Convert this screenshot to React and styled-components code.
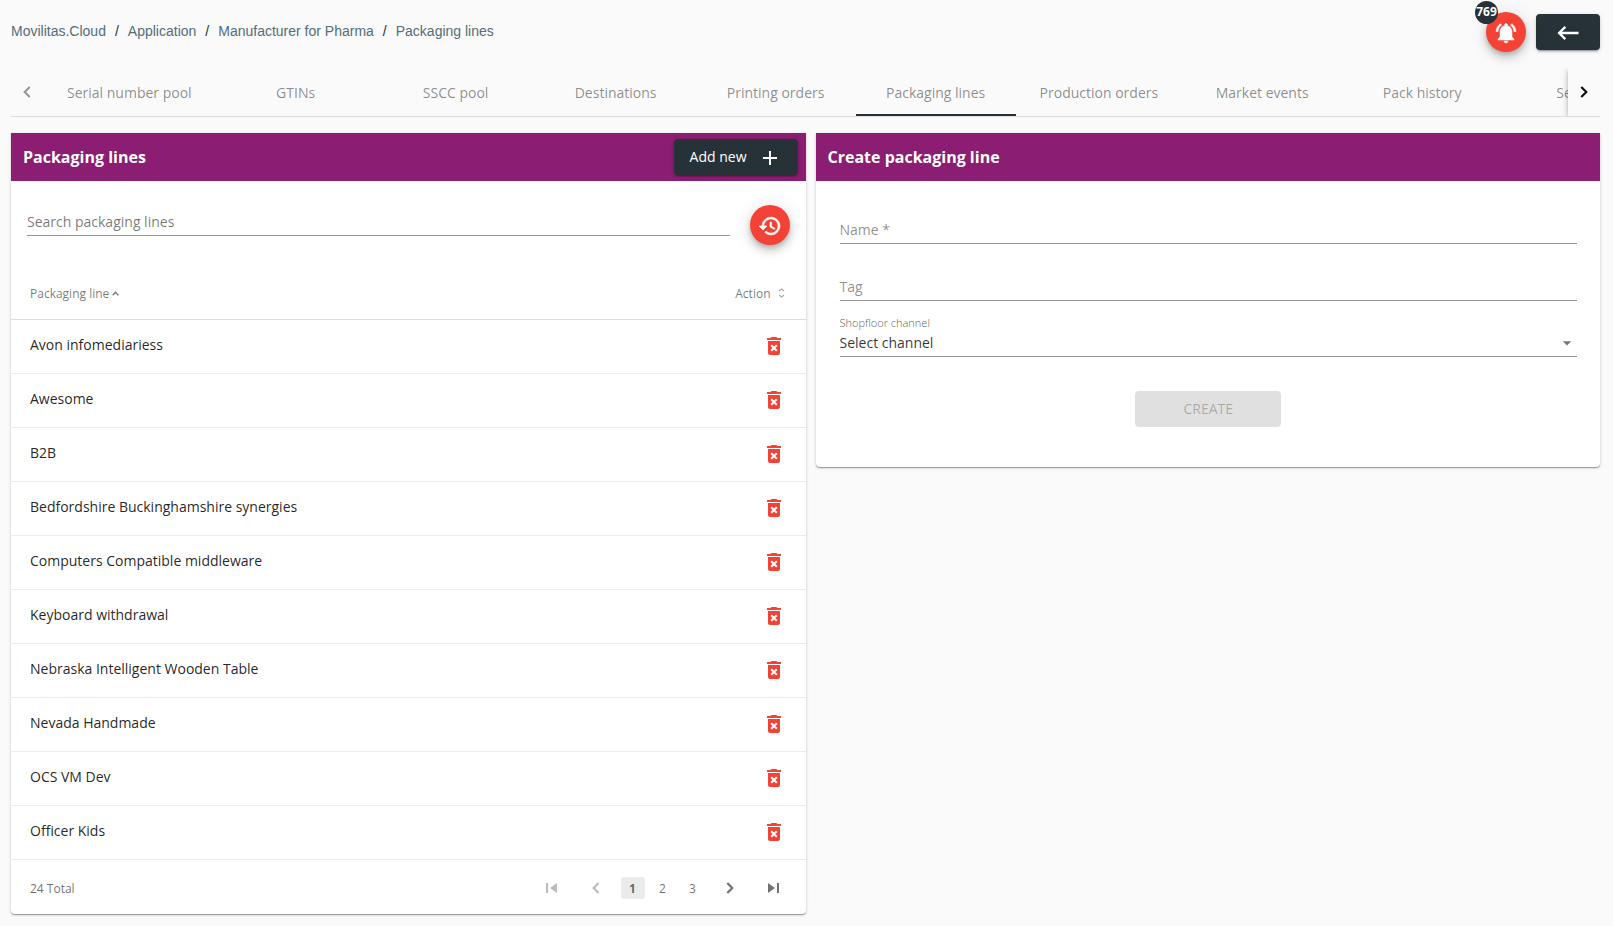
import { useState } from "react";
import styled, { createGlobalStyle } from "styled-components";
import {
  MdAdd,
  MdArrowDropDown,
  MdDeleteForever,
  MdHistory,
  MdKeyboardBackspace,
  MdNotificationsActive,
} from "react-icons/md";

const GlobalStyle = createGlobalStyle`
  * {
    box-sizing: border-box;
  }

  body {
    margin: 0;
    background-color: #fafafa;
    color: rgba(0, 0, 0, 0.87);
    font-family: "Open Sans", sans-serif;
    font-size: 14px;
  }

  button,
  input,
  select {
    font: inherit;
    color: inherit;
  }

  button {
    cursor: pointer;
  }
`;

const Page = styled.div`
  padding: 0 13px 11px 11px;
`;

const TopBar = styled.header`
  display: flex;
  align-items: center;
  justify-content: space-between;
  height: 68px;
  padding-bottom: 4px;
`;

const Breadcrumbs = styled.ol`
  display: flex;
  margin: 0;
  padding: 0 0 2px;
  list-style: none;
  font-family: "Liberation Sans", Arial, sans-serif;
  line-height: 20px;
`;

const Crumb = styled.li`
  & + &::before {
    content: "/";
    margin: 0 9px;
    color: #263238;
  }

  a {
    color: #546e7a;
    text-decoration: none;
  }
`;

const TopActions = styled.div`
  display: flex;
  align-items: center;
  gap: 10px;
`;

const RoundButton = styled.button`
  position: relative;
  display: flex;
  flex: none;
  align-items: center;
  justify-content: center;
  width: 40px;
  height: 40px;
  padding: 2px 0 0;
  border: none;
  border-radius: 50%;
  background-color: #f44336;
  color: white;
  font-size: 24px;
  box-shadow: 0 3px 5px -1px rgba(0, 0, 0, 0.2),
    0 6px 10px rgba(0, 0, 0, 0.14), 0 1px 18px rgba(0, 0, 0, 0.12);

  path:not([fill="none"]) {
    stroke-width: 0.5;
  }
`;

const Badge = styled.span`
  position: absolute;
  top: -11px;
  left: -11px;
  width: 23px;
  height: 23px;
  border-radius: 50%;
  background-color: #263238;
  font-size: 12px;
  font-weight: 700;
  line-height: 22px;
  text-align: center;
`;

const DarkButton = styled.button`
  display: flex;
  align-items: center;
  justify-content: center;
  gap: 11px;
  min-width: 64px;
  height: 36px;
  padding: 0 16px 2px;
  border: none;
  border-radius: 4px;
  background-color: #263238;
  color: white;
  box-shadow: 0 3px 1px -2px rgba(0, 0, 0, 0.2),
    0 2px 2px rgba(0, 0, 0, 0.14), 0 1px 5px rgba(0, 0, 0, 0.12);

  svg {
    flex: none;
    margin-top: 4px;
    font-size: ${({ $iconSize }) => $iconSize}px;
  }
`;

const TabBar = styled.nav`
  display: flex;
  height: 49px;
  border-bottom: 1px solid #dcdcdc;
`;

const TabScroller = styled.div`
  display: flex;
  flex: 1;
  min-width: 0;
  overflow: hidden;
`;

const Tab = styled.a`
  display: flex;
  flex: none;
  align-items: center;
  justify-content: center;
  min-width: 160px;
  padding: 0 24px;
  border-top: 2px solid transparent;
  border-bottom: 2px solid ${({ $active }) => ($active ? "#263238" : "transparent")};
  color: rgba(0, 0, 0, 0.46);
  text-decoration: none;
`;

const TabArrow = styled.button`
  flex: none;
  width: 32px;
  padding: 0;
  border: none;
  background: none;
  z-index: 1;
  box-shadow: ${({ disabled }) =>
    disabled ? "none" : "0 2px 4px -1px rgba(0, 0, 0, 0.2), 0 4px 5px rgba(0, 0, 0, 0.14), 0 1px 10px rgba(0, 0, 0, 0.12)"};
  clip-path: inset(0 0 0 -10px);
  color: ${({ disabled }) => (disabled ? "#999999" : "#111111")};

  svg {
    display: block;
    margin: auto;
  }
`;

const Columns = styled.main`
  display: flex;
  align-items: flex-start;
  gap: 10px;
  margin-top: 16px;
`;

const Card = styled.section`
  flex: ${({ $half }) => ($half ? "0 0 50%" : "1")};
  min-width: 0;
  border-radius: 0 0 4px 4px;
  background-color: white;
  box-shadow: 0 1px 0 rgba(0, 0, 0, 0.25), 0 1px 3px rgba(0, 0, 0, 0.24);
`;

const CardHeader = styled.div`
  display: flex;
  align-items: center;
  justify-content: space-between;
  height: 48px;
  padding: 0 8px 0 12px;
  background-color: #8b1d72;
  color: white;
`;

const CardTitle = styled.h2`
  margin: 0;
  font-size: 16px;
  font-weight: 700;
`;

const SearchRow = styled.div`
  display: flex;
  align-items: flex-start;
  gap: 20px;
  padding: 24px 16px;
`;

const SearchInput = styled.input`
  flex: 1;
  min-width: 0;
  height: 31px;
  padding: 2px 0 0;
  border: none;
  border-bottom: 1px solid #949494;
  outline: none;
  background: none;

  &::placeholder {
    color: rgba(0, 0, 0, 0.54);
  }
`;

const Table = styled.table`
  width: 100%;
  border-collapse: separate;
  border-spacing: 0;
`;

const HeadCell = styled.th`
  height: 51px;
  padding: 0 21px 2px 19px;
  border-bottom: 1px solid #dddddd;
  color: rgba(0, 0, 0, 0.54);
  font-size: 12px;
  font-weight: 400;
  text-align: ${({ $right }) => ($right ? "right" : "left")};
`;

const SortButton = styled.button`
  display: inline-flex;
  align-items: center;
  gap: ${({ $gap }) => $gap}px;
  padding: 0;
  border: none;
  background: none;
`;

const Cell = styled.td`
  height: 54px;
  padding: 0 20px 5px 19px;
  border-bottom: 1px solid #ebebeb;
  text-align: ${({ $right }) => ($right ? "right" : "left")};
`;

const DeleteButton = styled.button`
  display: inline-block;
  padding: 3px 0 0;
  border: none;
  background: none;
  color: #f44336;
  font-size: 24px;
  vertical-align: middle;

  svg {
    display: block;
  }
`;

const Footer = styled.footer`
  display: flex;
  align-items: center;
  justify-content: space-between;
  height: 54px;
  padding: 2px 10px 0 19px;
  color: rgba(0, 0, 0, 0.58);
  font-size: 12px;
`;

const Pager = styled.nav`
  display: flex;
  align-items: center;
`;

const PagerArrow = styled.button`
  display: flex;
  align-items: center;
  justify-content: center;
  width: 44px;
  height: 22px;
  padding: 0;
  border: none;
  background: none;
  color: ${({ disabled }) => (disabled ? "#bdbdbd" : "#737373")};
`;

const PageButton = styled.button`
  width: 24px;
  height: 22px;
  margin: 0 3px;
  padding: 0;
  border: none;
  border-radius: 3px;
  background-color: ${({ $active }) => ($active ? "#ebebeb" : "transparent")};
  font-weight: ${({ $active }) => ($active ? 700 : 400)};
`;

const Form = styled.form`
  display: flex;
  flex-direction: column;
  padding: 32px 23px 40px 24px;
`;

const Field = styled.div`
  display: grid;
  align-items: center;
  height: 31px;
  margin-bottom: 26px;
  border-bottom: 1px solid #949494;

  > * {
    grid-area: 1 / 1;
  }
`;

const FieldInput = styled.input`
  width: 100%;
  height: 30px;
  padding: 2px 0 0;
  border: none;
  outline: none;
  background: none;

  &:focus + label,
  &:not(:placeholder-shown) + label {
    align-self: start;
    font-size: 11px;
    transform: translateY(-14px);
  }
`;

const FieldLabel = styled.label`
  padding-top: 2px;
  color: rgba(0, 0, 0, 0.46);
  pointer-events: none;
`;

const SelectField = styled.div`
  display: grid;
  grid-template-columns: 1fr 20px;
  align-items: center;
  margin-top: -11px;
  border-bottom: 1px solid #949494;

  svg {
    grid-area: 2 / 2;
    color: #757575;
    font-size: 20px;
    pointer-events: none;
  }
`;

const SelectLabel = styled.label`
  grid-column: 1 / -1;
  color: rgba(0, 0, 0, 0.7);
  font-size: 11px;
  font-weight: 300;
  line-height: 14px;
`;

const Select = styled.select`
  grid-area: 2 / 1 / 3 / 3;
  height: 26px;
  padding: 0 0 1px;
  border: none;
  outline: none;
  background: none;
  color: rgba(0, 0, 0, 0.8);
  appearance: none;
`;

const CreateButton = styled.button`
  align-self: center;
  width: 146px;
  height: 36px;
  margin-top: 34px;
  padding: 0 0 2px;
  border: none;
  border-radius: 4px;
  background-color: #e0e0e0;
  color: rgba(0, 0, 0, 0.26);
`;

const Chevron = ({ left }) => (
  <svg width="8" height="12" viewBox="0 0 8 12" fill="none" stroke="currentColor" strokeWidth="2.2">
    <path d={left ? "M6.7 1 1.7 6l5 5" : "M1.3 1l5 5-5 5"} />
  </svg>
);

const SkipIcon = ({ left }) => (
  <svg width="12" height="10" viewBox="0 0 12 10" fill="currentColor">
    <path d={left ? "M0 0h2v10H0zM11 0v10L4 5z" : "M9 0h2v10H9zM0 0v10l7-5z"} />
  </svg>
);

const SortUp = () => (
  <svg width="7" height="5" viewBox="0 0 7 5" fill="none" stroke="currentColor" strokeWidth="1.3">
    <path d="M.7 4.2 3.5 1.2l2.8 3" />
  </svg>
);

const SortNone = () => (
  <svg width="7" height="10" viewBox="0 0 7 10" fill="none" stroke="#a8a8a8" strokeWidth="1.1">
    <path d="M1 3l2.5-2L6 3M1 7l2.5 2L6 7" />
  </svg>
);

const crumbs = ["Movilitas.Cloud", "Application", "Manufacturer for Pharma", "Packaging lines"];

const tabs = [
  "Serial number pool",
  "GTINs",
  "SSCC pool",
  "Destinations",
  "Printing orders",
  "Packaging lines",
  "Production orders",
  "Market events",
  "Pack history",
  "Settings",
];

const lines = [
  "Avon infomediariess",
  "Awesome",
  "B2B",
  "Bedfordshire Buckinghamshire synergies",
  "Computers Compatible middleware",
  "Keyboard withdrawal",
  "Nebraska Intelligent Wooden Table",
  "Nevada Handmade",
  "OCS VM Dev",
  "Officer Kids",
];

const PackagingLines = () => {
  const [page, setPage] = useState(1);

  return (
    <Card $half>
      <CardHeader>
        <CardTitle>Packaging lines</CardTitle>
        <DarkButton type="button" $iconSize={24}>
          Add new
          <MdAdd />
        </DarkButton>
      </CardHeader>
      <SearchRow>
        <SearchInput
          type="text"
          aria-label="Search packaging lines"
          placeholder="Search packaging lines"
        />
        <RoundButton type="button" aria-label="Reset search">
          <MdHistory />
        </RoundButton>
      </SearchRow>
      <Table>
        <thead>
          <tr>
            <HeadCell>
              <SortButton type="button" $gap={3}>
                Packaging line <SortUp />
              </SortButton>
            </HeadCell>
            <HeadCell $right>
              <SortButton type="button" $gap={7}>
                Action <SortNone />
              </SortButton>
            </HeadCell>
          </tr>
        </thead>
        <tbody>
          {lines.map((line) => (
            <tr key={line}>
              <Cell>{line}</Cell>
              <Cell $right>
                <DeleteButton type="button" aria-label={`Delete ${line}`}>
                  <MdDeleteForever />
                </DeleteButton>
              </Cell>
            </tr>
          ))}
        </tbody>
      </Table>
      <Footer>
        <span>24 Total</span>
        <Pager aria-label="Pages">
          <PagerArrow aria-label="First page" disabled={page === 1} onClick={() => setPage(1)}>
            <SkipIcon left />
          </PagerArrow>
          <PagerArrow aria-label="Previous page" disabled={page === 1} onClick={() => setPage(page - 1)}>
            <Chevron left />
          </PagerArrow>
          {[1, 2, 3].map((number) => (
            <PageButton key={number} $active={number === page} onClick={() => setPage(number)}>
              {number}
            </PageButton>
          ))}
          <PagerArrow aria-label="Next page" disabled={page === 3} onClick={() => setPage(page + 1)}>
            <Chevron />
          </PagerArrow>
          <PagerArrow aria-label="Last page" disabled={page === 3} onClick={() => setPage(3)}>
            <SkipIcon />
          </PagerArrow>
        </Pager>
      </Footer>
    </Card>
  );
};

const CreateLine = () => (
  <Card>
    <CardHeader>
      <CardTitle>Create packaging line</CardTitle>
    </CardHeader>
    <Form onSubmit={(event) => event.preventDefault()}>
      <Field>
        <FieldInput id="name" type="text" placeholder=" " required />
        <FieldLabel htmlFor="name">Name *</FieldLabel>
      </Field>
      <Field>
        <FieldInput id="tag" type="text" placeholder=" " />
        <FieldLabel htmlFor="tag">Tag</FieldLabel>
      </Field>
      <SelectField>
        <SelectLabel htmlFor="channel">Shopfloor channel</SelectLabel>
        <Select id="channel">
          <option>Select channel</option>
        </Select>
        <MdArrowDropDown />
      </SelectField>
      <CreateButton type="submit" disabled>
        CREATE
      </CreateButton>
    </Form>
  </Card>
);

const App = () => (
  <>
    <GlobalStyle />
    <Page>
      <TopBar>
        <Breadcrumbs>
          {crumbs.map((crumb) => (
            <Crumb key={crumb}>
              <a href="#">{crumb}</a>
            </Crumb>
          ))}
        </Breadcrumbs>
        <TopActions>
          <RoundButton type="button" aria-label="Notifications">
            <MdNotificationsActive />
            <Badge>769</Badge>
          </RoundButton>
          <DarkButton type="button" aria-label="Back" $iconSize={28}>
            <MdKeyboardBackspace />
          </DarkButton>
        </TopActions>
      </TopBar>
      <TabBar>
        <TabArrow type="button" aria-label="Previous tabs" disabled>
          <Chevron left />
        </TabArrow>
        <TabScroller>
          {tabs.map((tab) => (
            <Tab key={tab} href="#" $active={tab === "Packaging lines"}>
              {tab}
            </Tab>
          ))}
        </TabScroller>
        <TabArrow type="button" aria-label="Next tabs">
          <Chevron />
        </TabArrow>
      </TabBar>
      <Columns>
        <PackagingLines />
        <CreateLine />
      </Columns>
    </Page>
  </>
);

export default App;
